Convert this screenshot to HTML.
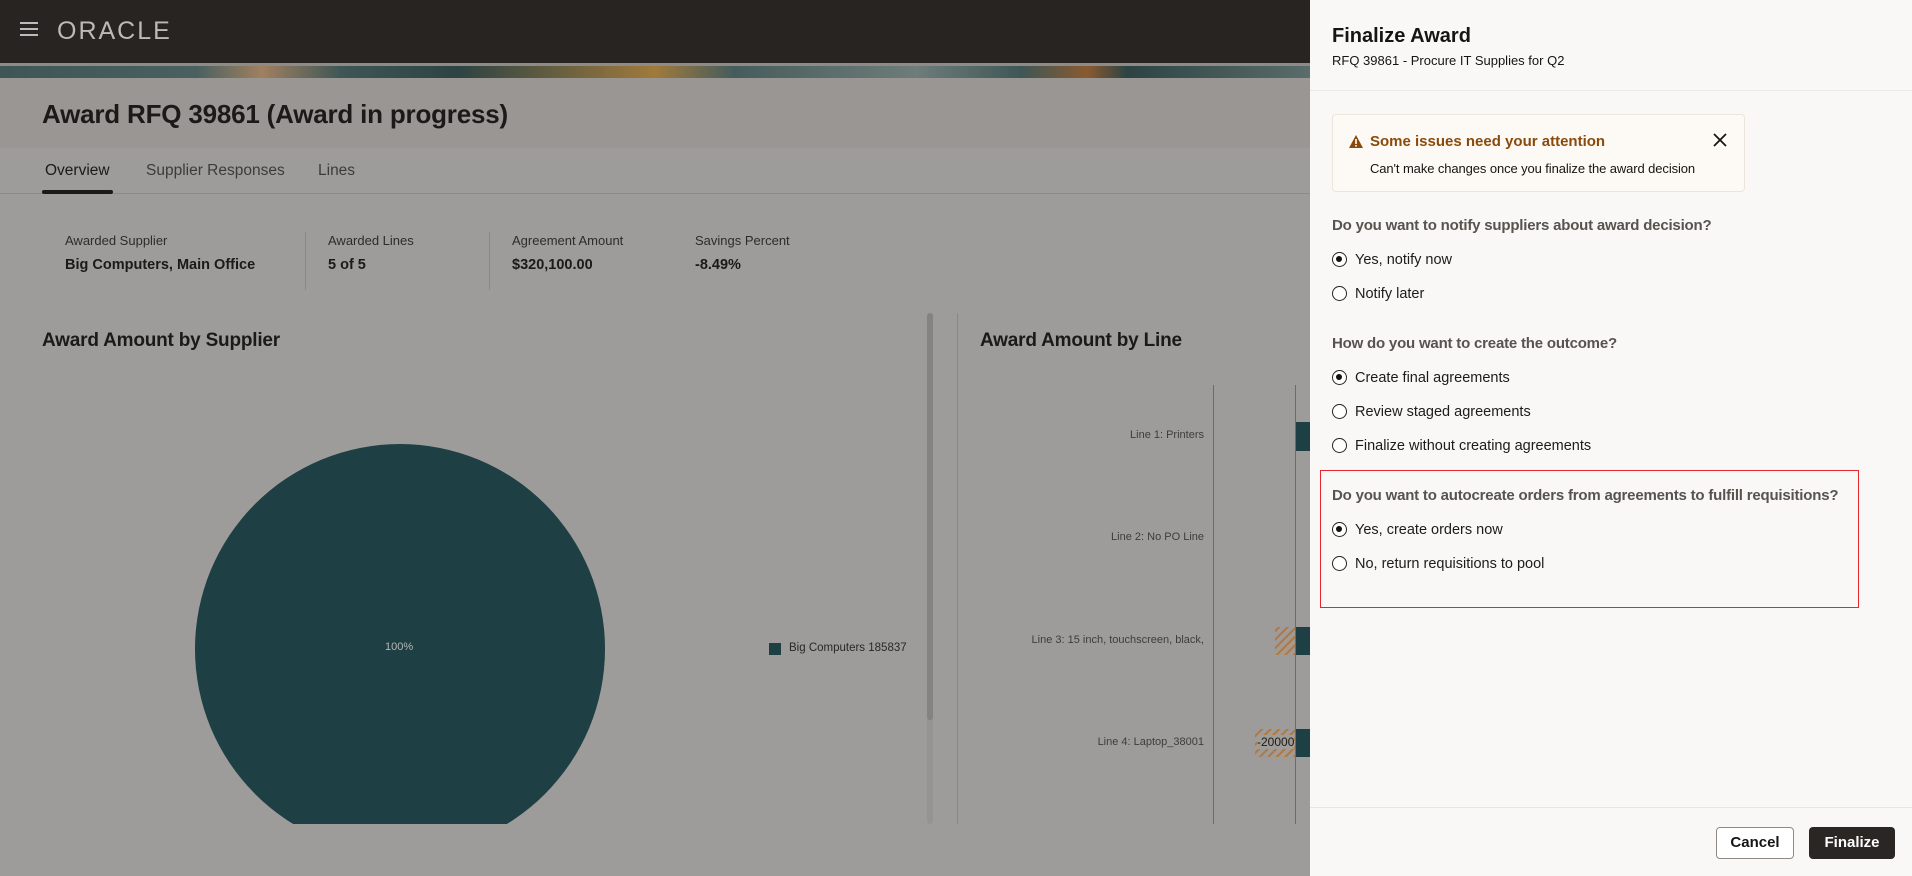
<!DOCTYPE html>
<html><head><meta charset="utf-8"><style>
*{margin:0;padding:0;box-sizing:border-box}
body{width:1912px;height:876px;position:relative;overflow:hidden;background:#9d9c9a;font-family:"Liberation Sans",sans-serif}
.a{position:absolute;white-space:nowrap}
.r{position:absolute;width:15px;height:15px;border:1.5px solid #222;border-radius:50%;background:#fff}
.r.on::after{content:"";position:absolute;left:3px;top:3px;width:6px;height:6px;border-radius:50%;background:#111}
.lbl{position:absolute;font-size:14.5px;color:#1e1c1a;white-space:nowrap}
.q{position:absolute;font-size:15px;color:#57534f;font-weight:bold;white-space:nowrap;letter-spacing:-0.2px}
.ll{position:absolute;font-size:11px;color:#3f3d3b;text-align:right;right:708px;white-space:nowrap}
</style></head><body>
<div class="a" style="left:0;top:0;width:1310px;height:63px;background:#272422"></div>
<div class="a" style="left:20px;top:22px;width:18px;height:2px;background:#bbb;box-shadow:0 6px 0 #bbb,0 12px 0 #bbb"></div>
<div class="a" style="left:57px;top:17px;font-size:25px;color:#bdbab6;letter-spacing:2px">ORACLE</div>
<div class="a" style="left:0;top:63px;width:1310px;height:3px;background:#8d8a88"></div>
<div class="a" style="left:0;top:66px;width:1310px;height:12px;background:linear-gradient(90deg,#3f5656 0%,#4a6060 15%,#a08060 20%,#3f5656 26%,#2d4343 35%,#a07a3c 50%,#465c5c 56%,#6e7c7b 70%,#3f5656 78%,#8a5a30 83%,#2d4343 86%,#5a6c6c 100%)"></div>
<div class="a" style="left:0;top:78px;width:1310px;height:70px;background:#9a9693"></div>
<div class="a" style="left:42px;top:99px;font-size:26px;font-weight:bold;color:#1c1a18;letter-spacing:-0.2px">Award RFQ 39861 (Award in progress)</div>
<div class="a" style="left:45px;top:162px;font-size:15.5px;color:#1c1a18">Overview</div>
<div class="a" style="left:146px;top:162px;font-size:15.5px;color:#3d3b39">Supplier Responses</div>
<div class="a" style="left:318px;top:162px;font-size:15.5px;color:#3d3b39">Lines</div>
<div class="a" style="left:0;top:193px;width:1310px;height:1px;background:#8c8a88"></div>
<div class="a" style="left:42px;top:190px;width:71px;height:4px;background:#1c1a18;border-radius:2px"></div>
<div class="a" style="left:65px;top:233px;font-size:13px;color:#2e2c2a">Awarded Supplier</div>
<div class="a" style="left:65px;top:257px;font-size:14.5px;font-weight:bold;color:#1c1a18">Big Computers, Main Office</div>
<div class="a" style="left:305px;top:232px;width:1px;height:58px;background:#8a8886"></div>
<div class="a" style="left:328px;top:233px;font-size:13px;color:#2e2c2a">Awarded Lines</div>
<div class="a" style="left:328px;top:257px;font-size:14.5px;font-weight:bold;color:#1c1a18">5 of 5</div>
<div class="a" style="left:489px;top:232px;width:1px;height:58px;background:#8a8886"></div>
<div class="a" style="left:512px;top:233px;font-size:13px;color:#2e2c2a">Agreement Amount</div>
<div class="a" style="left:512px;top:257px;font-size:14.5px;font-weight:bold;color:#1c1a18">$320,100.00</div>
<div class="a" style="left:695px;top:233px;font-size:13px;color:#2e2c2a">Savings Percent</div>
<div class="a" style="left:695px;top:257px;font-size:14.5px;font-weight:bold;color:#1c1a18">-8.49%</div>
<div class="a" style="left:42px;top:330px;font-size:19px;font-weight:bold;color:#1c1a18;letter-spacing:-0.2px">Award Amount by Supplier</div>
<div class="a" style="left:927px;top:313px;width:6px;height:511px;background:#959492;border-radius:3px"></div>
<div class="a" style="left:927px;top:313px;width:6px;height:407px;background:#848381;border-radius:3px"></div>
<div class="a" style="left:0;top:313px;width:1310px;height:511px;overflow:hidden">
<div class="a" style="left:195px;top:131px;width:410px;height:410px;border-radius:50%;background:#1e3f43"></div>
<div class="a" style="left:385px;top:328px;font-size:11px;color:#b5b8b6">100%</div>
<div class="a" style="left:769px;top:330px;width:12px;height:12px;background:#1e3f43"></div>
<div class="a" style="left:789px;top:329px;font-size:11.5px;color:#2a2826">Big Computers 185837</div>
</div>
<div class="a" style="left:957px;top:313px;width:1px;height:511px;background:#8a8886"></div>
<div class="a" style="left:980px;top:330px;font-size:19px;font-weight:bold;color:#1c1a18;letter-spacing:-0.2px">Award Amount by Line</div>
<div class="a" style="left:1213px;top:385px;width:1px;height:439px;background:#6d6b69"></div>
<div class="a" style="left:1295px;top:385px;width:1px;height:439px;background:#6d6b69"></div>
<div class="ll" style="top:429px">Line 1: Printers</div>
<div class="ll" style="top:531px">Line 2: No PO Line</div>
<div class="ll" style="top:634px">Line 3: 15 inch, touchscreen, black,</div>
<div class="ll" style="top:736px">Line 4: Laptop_38001</div>
<div class="a" style="left:1296px;top:422px;width:14px;height:29px;background:#1e3f43"></div>
<div class="a" style="left:1296px;top:627px;width:14px;height:28px;background:#1e3f43"></div>
<div class="a" style="left:1275px;top:627px;width:20px;height:28px;background:repeating-linear-gradient(-45deg,#b07a44 0 2px,#a09b96 2px 6px)"></div>
<div class="a" style="left:1296px;top:729px;width:14px;height:28px;background:#1e3f43"></div>
<div class="a" style="left:1255px;top:729px;width:40px;height:28px;background:repeating-linear-gradient(-45deg,#b07a44 0 2px,#a09b96 2px 6px)"></div>
<div class="a" style="left:1257px;top:735px;font-size:12px;color:#1c1a18;background:#a09c98">-20000</div>

<div class="a" style="left:1310px;top:0;width:602px;height:876px;background:#f9f8f6"></div>
<div class="a" style="left:1332px;top:25px;font-size:20px;font-weight:bold;color:#161513">Finalize Award</div>
<div class="a" style="left:1332px;top:53px;font-size:13px;color:#161513">RFQ 39861 - Procure IT Supplies for Q2</div>
<div class="a" style="left:1310px;top:90px;width:602px;height:1px;background:#ebe9e6"></div>
<div class="a" style="left:1332px;top:114px;width:413px;height:78px;background:#fdf9f4;border:1px solid #ece5dc;border-radius:4px"></div>
<svg class="a" style="left:1349px;top:135px" width="14" height="13" viewBox="0 0 14 13"><path d="M7 0L14 13H0Z" fill="#8a4a0c"/><rect x="6.2" y="4" width="1.6" height="5" fill="#fff"/><rect x="6.2" y="10" width="1.6" height="1.6" fill="#fff"/></svg>
<div class="a" style="left:1370px;top:133px;font-size:15px;font-weight:bold;color:#8a4a0c">Some issues need your attention</div>
<div class="a" style="left:1370px;top:161px;font-size:13px;color:#161513;letter-spacing:-0.1px">Can't make changes once you finalize the award decision</div>
<svg class="a" style="left:1713px;top:133px" width="14" height="14" viewBox="0 0 14 14"><path d="M1 1L13 13M13 1L1 13" stroke="#161513" stroke-width="1.8"/></svg>
<div class="q" style="left:1332px;top:217px">Do you want to notify suppliers about award decision?</div>
<div class="r on" style="left:1332px;top:252px"></div><div class="lbl" style="left:1355px;top:252px">Yes, notify now</div>
<div class="r" style="left:1332px;top:286px"></div><div class="lbl" style="left:1355px;top:286px">Notify later</div>
<div class="q" style="left:1332px;top:335px">How do you want to create the outcome?</div>
<div class="r on" style="left:1332px;top:370px"></div><div class="lbl" style="left:1355px;top:370px">Create final agreements</div>
<div class="r" style="left:1332px;top:404px"></div><div class="lbl" style="left:1355px;top:404px">Review staged agreements</div>
<div class="r" style="left:1332px;top:438px"></div><div class="lbl" style="left:1355px;top:438px">Finalize without creating agreements</div>
<div class="a" style="left:1320px;top:470px;width:539px;height:138px;border:1.5px solid #e8262e"></div>
<div class="q" style="left:1332px;top:487px">Do you want to autocreate orders from agreements to fulfill requisitions?</div>
<div class="r on" style="left:1332px;top:522px"></div><div class="lbl" style="left:1355px;top:522px">Yes, create orders now</div>
<div class="r" style="left:1332px;top:556px"></div><div class="lbl" style="left:1355px;top:556px">No, return requisitions to pool</div>
<div class="a" style="left:1310px;top:807px;width:602px;height:1px;background:#e8e6e3"></div>
<div class="a" style="left:1716px;top:827px;width:78px;height:32px;border:1px solid #8e8a86;border-radius:4px;background:#fff;font-size:15px;font-weight:bold;color:#161513;text-align:center;line-height:30px">Cancel</div>
<div class="a" style="left:1809px;top:827px;width:86px;height:32px;border-radius:4px;background:#2a2624;font-size:15px;font-weight:bold;color:#fff;text-align:center;line-height:32px">Finalize</div>
</body></html>
